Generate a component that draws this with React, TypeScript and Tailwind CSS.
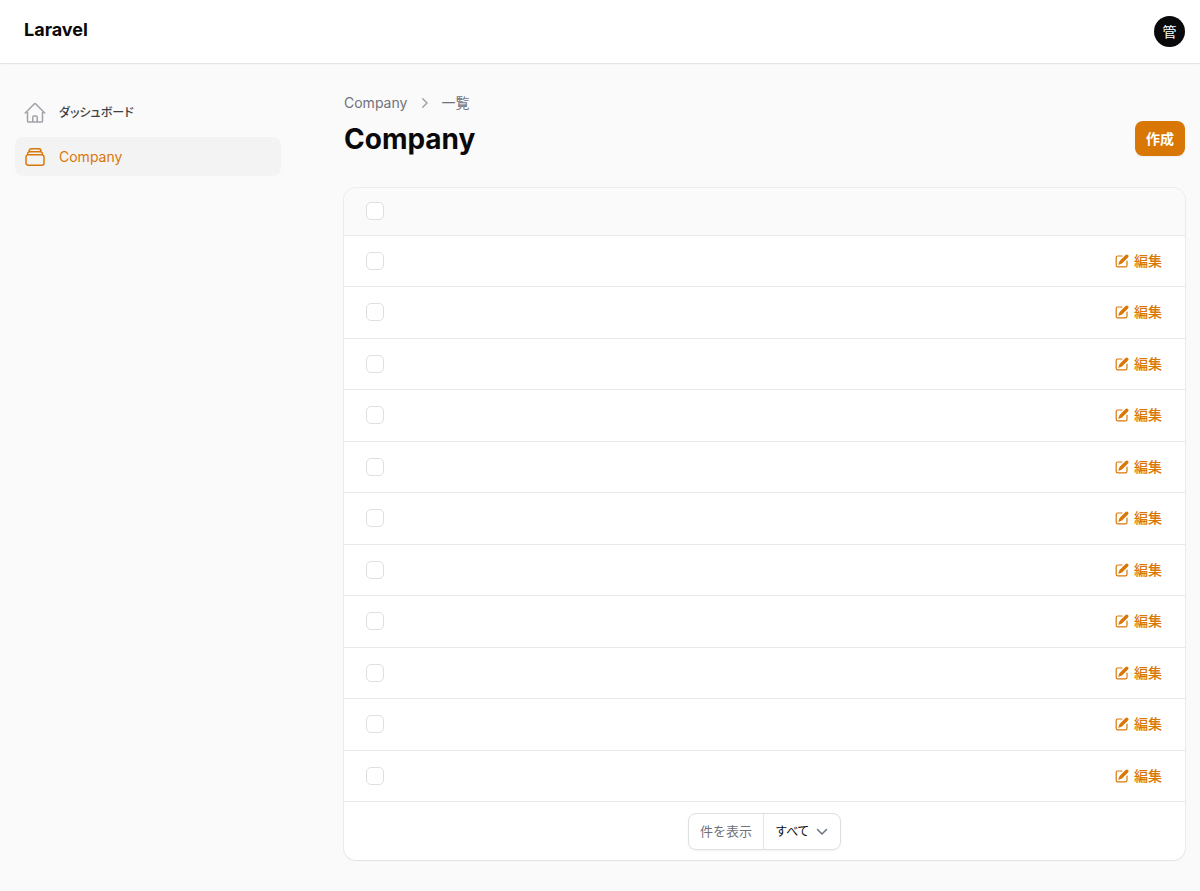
import {
  HiOutlineHome,
  HiOutlineRectangleStack,
  HiMiniPencilSquare,
  HiMiniChevronRight,
} from "react-icons/hi2"

const NAV = [
  { href: "#dashboard", label: "ダッシュボード", icon: HiOutlineHome,           active: false },
  { href: "#company",   label: "Company",        icon: HiOutlineRectangleStack, active: true  },
]

const ROWS = Array.from({ length: 11 }, (_, i) => i + 1)

function Checkbox({ label }: { label: string }) {
  return (
    <input
      type="checkbox"
      aria-label={label}
      className="block h-[18px] w-[18px] appearance-none rounded-[5px] border border-[#dfdfe1] bg-white checked:border-[#d97706] checked:bg-[#d97706]"
    />
  )
}

function Topbar() {
  return (
    <header className="flex h-[63px] items-center justify-between bg-white pr-[15px] pl-6 shadow-xs ring-1 ring-[#09090b]/5">
      <a href="#dashboard" className="pb-1 text-lg leading-7 font-bold text-[#09090b]">
        Laravel
      </a>
      <button
        type="button"
        className="flex h-[31px] w-[31px] items-center justify-center rounded-full bg-[#09090b] text-sm text-white"
      >
        管
      </button>
    </header>
  )
}

function Sidebar() {
  return (
    <nav className="w-[313px] shrink-0 py-[30px] pr-8 pl-[15px]">
      <ul className="flex flex-col gap-[5px]">
        {NAV.map((item) => (
          <li key={item.href}>
            <a
              href={item.href}
              className={`flex h-[39px] items-center gap-3 rounded-lg px-2 ${
                item.active ? "bg-[#f3f3f4] text-sm text-[#d97706]" : "text-xs font-medium text-[#3f3f46]"
              }`}
            >
              <item.icon className={`h-6 w-6 ${item.active ? "" : "text-[#a1a1aa]"}`} />
              <span className="[font-feature-settings:'palt']">{item.label}</span>
            </a>
          </li>
        ))}
      </ul>
    </nav>
  )
}

function CompanyTable() {
  return (
    <section className="mt-[31px] overflow-hidden rounded-xl bg-white shadow-xs ring-1 ring-[#09090b]/5">
      <table className="w-full">
        <thead className="bg-[#fafafa]">
          <tr className="h-[47px]">
            <th scope="col" className="pl-[22px]">
              <Checkbox label="すべて選択" />
            </th>
            <th scope="col" aria-label="操作" />
          </tr>
        </thead>
        <tbody>
          {ROWS.map((id) => (
            <tr key={id} className="border-t border-[#e9e9eb] odd:h-[51px] even:h-[52px]">
              <td className="pl-[22px]">
                <Checkbox label={`Company ${id}`} />
              </td>
              <td className="pr-[23px]">
                <a
                  href={`#company-${id}`}
                  className="ml-auto flex w-fit items-center gap-1 text-sm leading-5 font-medium text-[#d97706]"
                >
                  <HiMiniPencilSquare className="h-4 w-4" />
                  編集
                </a>
              </td>
            </tr>
          ))}
        </tbody>
      </table>

      {/* Pagination */}
      <div className="flex justify-center border-t border-[#e9e9eb] pt-[11px] pb-[10px]">
        <div className="flex h-[37px] items-stretch rounded-lg border border-[#dfdfe1] shadow-xs">
          <label
            htmlFor="per-page"
            className="flex items-center border-r border-[#e4e4e7] px-[11px] text-[13px] text-[#71717a]"
          >
            件を表示
          </label>
          <div className="relative flex">
            <select
              id="per-page"
              className="w-[76px] appearance-none bg-transparent pl-3 text-xs text-[#09090b] [font-feature-settings:'palt']"
            >
              <option>すべて</option>
            </select>
            <svg
              viewBox="0 0 20 20"
              fill="none"
              stroke="#6b7280"
              strokeWidth="1.5"
              strokeLinecap="round"
              strokeLinejoin="round"
              className="pointer-events-none absolute top-2 right-2 h-5 w-5"
            >
              <path d="m5.500 7.500 4.500 4.500 4.500-4.500" />
            </svg>
          </div>
        </div>
      </div>
    </section>
  )
}

export default function App() {
  return (
    <div className="min-h-screen bg-[#fafafa] font-['Inter','Noto_Sans_CJK_JP',sans-serif]">
      <Topbar />
      <div className="flex">
        <Sidebar />
        <main className="min-w-0 flex-1 pt-[30px] pr-[15px] pb-[31px] pl-[31px]">
          <div className="flex items-end justify-between">
            <div>
              <nav
                aria-label="Breadcrumb"
                className="flex items-center gap-[7px] text-sm leading-5 text-[#71717a]"
              >
                <a href="#company">Company</a>
                <HiMiniChevronRight className="h-5 w-5 text-[#a1a1aa]" />
                <span>一覧</span>
              </nav>
              <h1 className="mt-2 text-[28px] leading-9 font-bold text-[#09090b]">Company</h1>
            </div>
            <button
              type="button"
              className="mb-px h-[35px] rounded-lg bg-[#d97706] px-[11px] text-sm font-semibold text-white shadow-xs"
            >
              作成
            </button>
          </div>
          <CompanyTable />
        </main>
      </div>
    </div>
  )
}
